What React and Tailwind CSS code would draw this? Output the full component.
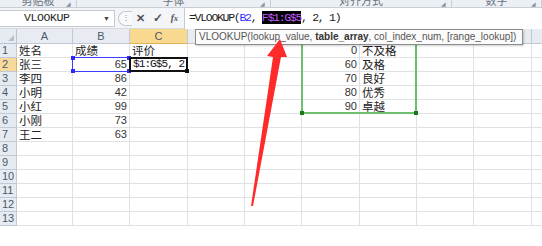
import React from 'react';

const cols = ['A', 'B', 'C', 'D', 'E', 'F', 'G', 'H', 'I', 'J'];

const rows = [
    ['姓名', '成绩', '评价', '', '', '0', '不及格'],
    ['张三', '65', '', '', '', '60', '及格'],
    ['李四', '86', '', '', '', '70', '良好'],
    ['小明', '42', '', '', '', '80', '优秀'],
    ['小红', '99', '', '', '', '90', '卓越'],
    ['小刚', '73'],
    ['王二', '63'],
    [], [], [], [], [], [],
];

const groups = [
    { label: '剪贴板', w: 'w-[77px]' },
    { label: '字体', w: 'w-[194px]' },
    { label: '对齐方式', w: 'w-[181px]' },
    { label: '数字', w: 'flex-1' },
];

function Handle({ className }) {
    return <span className={`absolute w-[4px] h-[4px] ${className}`} />;
}

function Cell({ r, c, value }) {
    const isNum = value !== '' && value !== undefined && /^\d+$/.test(value);
    return (
        <div className="relative border-r border-b border-[#dfe1e3] flex items-center overflow-visible">
            {value ? (
                <span
                    className={`w-full whitespace-nowrap leading-none ${
                        isNum
                            ? "text-right pr-[2px] text-[11px] font-['Liberation_Sans'] text-[#333]"
                            : "pl-[2px] text-[11.5px] font-['Noto_Sans_CJK_SC',sans-serif] text-[#222]"
                    }`}
                >
                    {value}
                </span>
            ) : null}

            {r === 1 && c === 1 && (
                <div className="absolute left-[-1px] top-[-1px] w-[58px] h-[15px] border border-[#3d3dff] z-10">
                    <Handle className="bg-[#2a2aff] left-[-2px] top-[-2px]" />
                    <Handle className="bg-[#2a2aff] right-[-2px] top-[-2px]" />
                    <Handle className="bg-[#2a2aff] left-[-2px] bottom-[-2px]" />
                    <Handle className="bg-[#2a2aff] right-[-2px] bottom-[-2px]" />
                </div>
            )}

            {r === 1 && c === 2 && (
                <div className="absolute left-[-1px] top-[-1px] w-[59px] h-[15px] border-2 border-[#111] bg-white z-10 flex items-center">
                    <div className="w-full overflow-hidden">
                        <span className="block pl-[2px] text-[11px] tracking-[-0.9px] font-['Liberation_Mono'] text-[#111] leading-none whitespace-nowrap">
                            $1:G$5, 2
                        </span>
                    </div>
                    <Handle className="bg-[#111] right-[-3px] bottom-[-3px]" />
                </div>
            )}

            {r === 0 && c === 5 && (
                <div className="absolute left-[-1px] top-[-1px] w-[116px] h-[71px] border-2 border-[#6cbf6c] z-10">
                    <Handle className="bg-[#177a17] left-[-3px] bottom-[-3px]" />
                    <Handle className="bg-[#177a17] right-[-3px] bottom-[-3px]" />
                </div>
            )}
        </div>
    );
}

export default function App() {
    return (
        <div className="relative w-[542px] h-[246px] overflow-hidden bg-white font-['Liberation_Sans']">
            {/* ribbon group labels, cut off at the top */}
            <div className="h-[8px] flex bg-[#eceff3] border-b border-[#c9ced6] overflow-hidden">
                {groups.map((g) => (
                    <div key={g.label} className={`${g.w} relative flex justify-center border-r border-[#c9ced6]`}>
                        <span className="mt-[-6px] text-[11px] leading-[12px] text-[#6b7480] font-['Noto_Sans_CJK_SC',sans-serif]">
                            {g.label}
                        </span>
                        <span className="absolute right-[5px] top-[1px] text-[6px] leading-none text-[#8a929c]">◢</span>
                    </div>
                ))}
            </div>

            {/* formula bar */}
            <div className="h-[21px] flex items-center bg-[#f3f5f8] border-b border-[#d5dae1]">
                <div className="w-[115px] h-[17px] flex items-center bg-white border-r border-y border-[#c4cad3]">
                    <span className="pl-[24px] flex-1 text-[11.5px] tracking-[-0.4px] font-['Liberation_Mono'] text-[#222] leading-none">
                        VLOOKUP
                    </span>
                    <span className="pr-[4px] text-[7px] text-[#444] leading-none">▼</span>
                </div>
                <div className="w-[14px] h-[15px] ml-[3px] rounded-l-full border border-r-0 border-[#c4cad3] bg-[#f8f9fb] flex items-center justify-center">
                    <span className="text-[8px] text-[#888] leading-none">⋮</span>
                </div>
                <div className="w-[50px] flex items-center justify-around text-[#555]">
                    <span className="text-[11px] leading-none font-bold">✕</span>
                    <span className="text-[12px] leading-none font-bold">✓</span>
                    <span className="text-[10px] leading-none italic font-['Liberation_Serif'] font-bold">
                        f<span className="text-[8px]">x</span>
                    </span>
                </div>
                <div className="flex-1 h-[21px] ml-[2px] flex items-center bg-white border-l border-[#c4cad3]">
                    <span className="pl-[4px] text-[11.5px] tracking-[-1.3px] font-['Liberation_Mono'] text-[#222] leading-none whitespace-nowrap">
                        =VLOOKUP(<span className="text-[#3131ff]">B2</span>, <span className="bg-black text-[#c45cff]">F$1:G$5</span>, 2, 1)
                    </span>
                </div>
            </div>

            {/* sheet grid */}
            <div className="grid grid-cols-[17px_56px_57px_58px_57px_57px_58px_57px_57px_58px_57px] grid-rows-[15px_repeat(13,14px)]">
                <div className="relative bg-[#e6ebf1] border-r border-b border-[#b9c3d0]">
                    <span className="absolute right-[2px] bottom-[2px] w-0 h-0 border-l-[6px] border-t-[6px] border-l-transparent border-t-transparent border-b-[6px] border-b-[#b7bfc9] border-r-0" />
                </div>
                {cols.map((c) => (
                    <div
                        key={c}
                        className={`flex items-center justify-center border-r border-b border-[#c0c9d5] text-[11px] leading-none text-[#4b5a6b] ${
                            c === 'C' ? 'bg-[#f8d98f] border-b-[#e0b25b]' : 'bg-[#e8ecf2]'
                        }`}
                    >
                        {c}
                    </div>
                ))}

                {rows.map((row, r) => (
                    <React.Fragment key={r}>
                        <div
                            className={`flex items-center pl-[2px] border-r border-b border-[#c0c9d5] text-[11px] leading-none text-[#4b5a6b] ${
                                r === 1 ? 'bg-[#f8d99c] border-r-[#e0b25b]' : 'bg-[#e6ebf1]'
                            }`}
                        >
                            {r + 1}
                        </div>
                        {cols.map((c, ci) => (
                            <Cell key={c} r={r} c={ci} value={row[ci]} />
                        ))}
                    </React.Fragment>
                ))}
            </div>

            {/* function argument tooltip */}
            <div className="absolute left-[195px] top-[29px] w-[328px] h-[16px] flex items-center bg-[#fbfbfb] border border-[#8c8c8c] shadow-[1px_1px_2px_rgba(0,0,0,0.2)] z-20">
                <span className="pl-[3px] text-[10px] leading-none text-[#555] whitespace-nowrap">
                    VLOOKUP(lookup_value, <b className="text-[#333]">table_array</b>, col_index_num, [range_lookup])
                </span>
            </div>

            {/* red annotation arrow */}
            <svg className="absolute inset-0 z-30 pointer-events-none" width="542" height="246" viewBox="0 0 542 246">
                <polygon
                    points="280,39 287,57 281,57 253,206 251,206 273,57 267,56"
                    fill="#ff2b2b"
                />
            </svg>
        </div>
    );
}
